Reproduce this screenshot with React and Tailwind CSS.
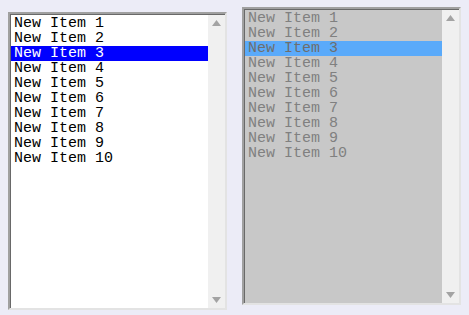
const items = Array.from({ length: 10 }, (_, i) => `New Item ${i + 1}`);

function Arrow({ down }) {
  return (
    <svg width="9" height="6" viewBox="0 0 9 6" className="block">
      <path d={down ? 'M0 0H9L4.5 6Z' : 'M0 6H9L4.5 0Z'} fill="#a3a3a3" />
    </svg>
  );
}

function ScrollBar() {
  return (
    <div className="w-[17px] bg-[#f0f0f0] flex flex-col items-center justify-between py-[5px]">
      <Arrow />
      <Arrow down />
    </div>
  );
}

function ListBox({ disabled, className }) {
  return (
    <div
      className={`w-[219px] h-[298px] flex border-2 border-t-[#a0a0a0] border-l-[#a0a0a0] border-r-[#e3e3e3] border-b-[#e3e3e3] ${className}`}
    >
      <div
        className={`flex-1 flex border-t border-l border-[#696969] ${
          disabled ? 'bg-[#c8c8c8]' : 'bg-white'
        }`}
      >
        <ul className="flex-1 pt-px">
          {items.map((it, i) => {
            const sel = i === 2;
            let cls = disabled ? 'text-[#808080]' : 'text-black';
            if (sel) cls = disabled ? 'bg-[#5aaafa] text-[#6e6e6e]' : 'bg-[#0000ff] text-white';
            return (
              <li key={it} className={`h-[15px] leading-[15px] pl-[3px] whitespace-pre ${cls}`}>
                {it}
              </li>
            );
          })}
        </ul>
        <ScrollBar />
      </div>
    </div>
  );
}

export default function App() {
  return (
    <div
      className="w-[469px] h-[315px] bg-[#ececf7] flex items-start pl-[8px] gap-[15px] text-[15px]"
      style={{ fontFamily: '"Liberation Mono", "Courier New", monospace' }}
    >
      <ListBox className="mt-[12px]" />
      <ListBox disabled className="mt-[7px]" />
    </div>
  );
}
